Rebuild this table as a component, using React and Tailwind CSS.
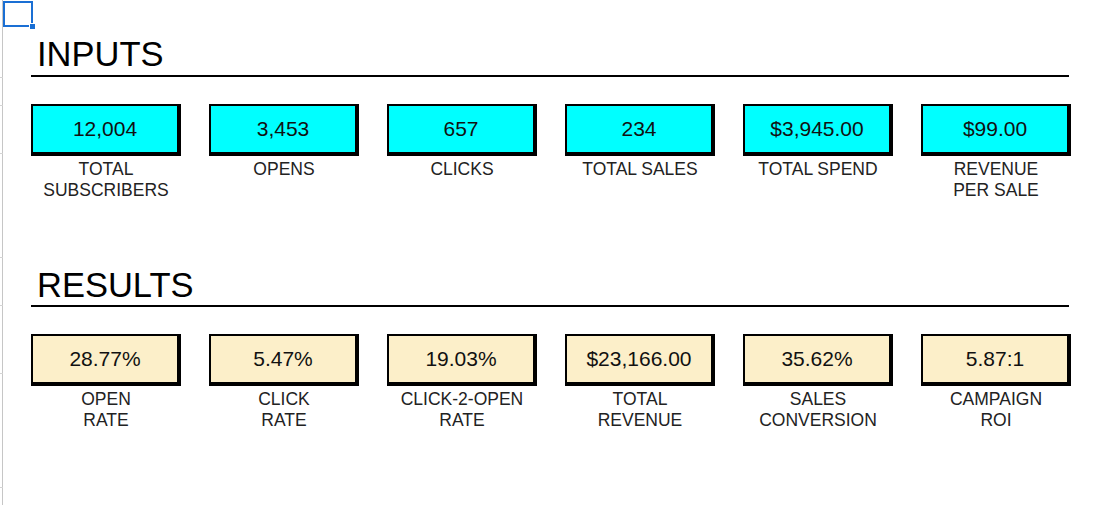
const inputs = [
  { value: '12,004', label: ['TOTAL', 'SUBSCRIBERS'] },
  { value: '3,453', label: ['OPENS'] },
  { value: '657', label: ['CLICKS'] },
  { value: '234', label: ['TOTAL SALES'] },
  { value: '$3,945.00', label: ['TOTAL SPEND'] },
  { value: '$99.00', label: ['REVENUE', 'PER SALE'] },
];

const results = [
  { value: '28.77%', label: ['OPEN', 'RATE'] },
  { value: '5.47%', label: ['CLICK', 'RATE'] },
  { value: '19.03%', label: ['CLICK-2-OPEN', 'RATE'] },
  { value: '$23,166.00', label: ['TOTAL', 'REVENUE'] },
  { value: '35.62%', label: ['SALES', 'CONVERSION'] },
  { value: '5.87:1', label: ['CAMPAIGN', 'ROI'] },
];

const ticks = [77, 105, 153, 257, 305, 373, 487];

function Section({ title, items, fill }) {
  return (
    <section>
      <h2 className="border-b-2 border-black pb-[3px] pl-[6px] text-[34.5px] leading-none text-black">{title}</h2>
      <div className="mt-[27px] grid grid-cols-[repeat(6,150px)] gap-x-[28px]">
        {items.map((item) => (
          <div key={item.value} className="flex flex-col items-center">
            <div className={`flex h-[52px] w-full items-center justify-center border-t-2 border-l-2 border-r-4 border-b-4 border-black text-[21px] text-[#111] ${fill}`}>
              {item.value}
            </div>
            <div className="mt-[3px] text-center text-[17.5px] leading-[21px] text-[#222]">
              {item.label.map((line) => (
                <div key={line}>{line}</div>
              ))}
            </div>
          </div>
        ))}
      </div>
    </section>
  );
}

export default function App() {
  return (
    <div className="relative flex min-h-[505px] bg-white font-['Liberation_Sans',Arial,sans-serif]">
      {/* sheet gutter */}
      <div className="w-[3px] shrink-0 border-r border-[#c6c6c6]" />

      {ticks.map((y) => (
        <div key={y} className="absolute left-0 h-px w-[3px] bg-[#d4d4d4]" style={{ top: y }} />
      ))}

      {/* selected cell */}
      <div className="absolute left-[3px] top-[1px] h-[26px] w-[30px] border-2 border-[#1a6fd4]" />
      <div className="absolute left-[29px] top-[23px] h-[7px] w-[7px] border border-white bg-[#1a6fd4]" />

      <main className="w-[1066px] pl-[28px] pt-[37px]">
        <Section title="INPUTS" items={inputs} fill="bg-[#00ffff]" />
        <div className="h-[67px]" />
        <Section title="RESULTS" items={results} fill="bg-[#fcefc9]" />
      </main>
    </div>
  );
}
